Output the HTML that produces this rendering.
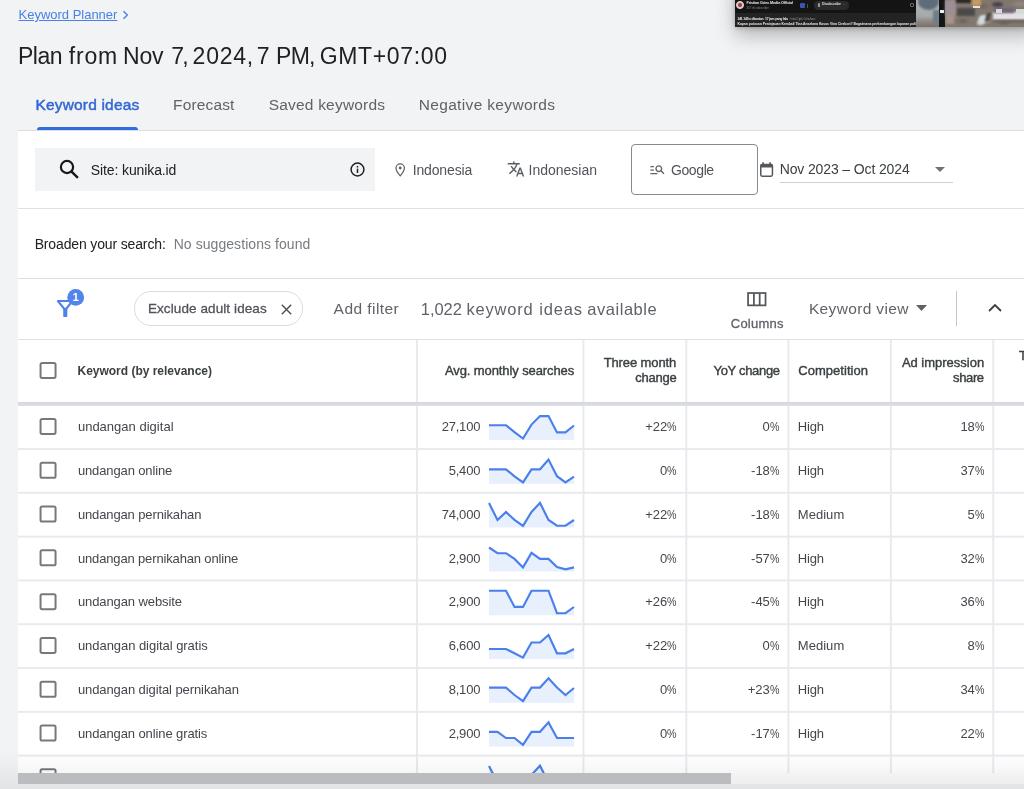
<!DOCTYPE html>
<html lang="en">
<head>
<meta charset="utf-8">
<title>Keyword Planner</title>
<style>
*{box-sizing:border-box;margin:0;padding:0}
html,body{width:1024px;height:789px;overflow:hidden;background:#f1f3f4;font-family:"Liberation Sans",sans-serif;color:#3c4043}
body{position:relative;opacity:.999}
.abs{position:absolute;white-space:nowrap}
.t{position:absolute;white-space:nowrap;line-height:1}
.panel{position:absolute;left:18px;top:130px;width:1006px;height:653px;background:#fff;border-top:1px solid #dadce0}
.hl{position:absolute;height:1px;background:#e0e0e0;left:18px;width:1006px}
.vl{position:absolute;width:1px;background:#e0e0e0;top:339px;height:434px}
.cb{position:absolute;left:39.6px;width:17px;height:17px;border:2px solid #727578;border-radius:2px;background:#fff}
.kw{position:absolute;left:78px;font-size:13px;color:#43474c;line-height:1;white-space:nowrap}
.num{position:absolute;font-size:13px;color:#43474c;line-height:1;white-space:nowrap;text-align:right}
.hd{position:absolute;font-size:13px;-webkit-text-stroke:0.4px #3c4043;color:#3c4043;line-height:15px;white-space:nowrap}
.pc{display:inline-block;transform:scaleX(.82);transform-origin:100% 50%;margin-left:-2.1px;letter-spacing:0}
svg{position:absolute;overflow:visible}
</style>
</head>
<body>

<!-- breadcrumb -->
<a class="t" id="bc" style="letter-spacing:-0.013px;transform:translateX(0.57px);left:18px;top:8px;font-size:13px;color:#4a80e8;text-decoration:underline;text-underline-offset:1.2px">Keyword Planner</a>
<svg style="left:122px;top:10px" width="7" height="10" viewBox="0 0 7 10"><path d="M1.5 1.2 L5.3 5 L1.5 8.8" fill="none" stroke="#4a80e8" stroke-width="1.4"/></svg>

<!-- title -->
<div class="t" id="ti0" style="letter-spacing:-0.531px;left:18.0px;top:45px;font-size:23px;color:#202124">Plan</div><div class="t" id="ti1" style="letter-spacing:0.8px;transform:translateX(2.07px);left:66.75px;top:45px;font-size:23px;color:#202124">from</div><div class="t" id="ti2" style="letter-spacing:-0.141px;left:123.0px;top:45px;font-size:23px;color:#202124">Nov</div><div class="t" id="ti3" style="letter-spacing:-1.793px;transform:translateX(0.63px);left:170.5px;top:45px;font-size:23px;color:#202124">7,</div><div class="t" id="ti4" style="letter-spacing:0.716px;transform:translateX(0.87px);left:191.75px;top:45px;font-size:23px;color:#202124">2024,</div><div class="t" id="ti5" style="letter-spacing:0px;transform:translateX(0.79px);left:256.0px;top:45px;font-size:23px;color:#202124">7</div><div class="t" id="ti6" style="letter-spacing:-0.7px;left:276.0px;top:45px;font-size:23px;color:#202124">PM,</div><div class="t" id="ti7" style="letter-spacing:0.631px;transform:translateX(0.79px);left:319.0px;top:45px;font-size:23px;color:#202124">GMT+07:00</div>

<!-- tabs -->
<div class="t" id="tab1" style="letter-spacing:0.177px;transform:translateX(0.94px);left:34.5px;top:97px;font-size:15.5px;color:#3267d6;-webkit-text-stroke:.45px #3267d6">Keyword ideas</div>
<div class="t" id="tab2" style="letter-spacing:0.153px;transform:translateX(0.01px);left:173px;top:97px;font-size:15.5px;color:#5f6368">Forecast</div>
<div class="t" id="tab3" style="letter-spacing:0.204px;transform:translateX(-0.83px);left:269.5px;top:97px;font-size:15.5px;color:#5f6368">Saved keywords</div>
<div class="t" id="tab4" style="letter-spacing:0.339px;transform:translateX(-0.79px);left:419.5px;top:97px;font-size:15.5px;color:#5f6368">Negative keywords</div>
<div class="abs" style="left:37px;top:127px;width:101px;height:3px;background:#306cde;border-radius:3px 3px 0 0"></div>

<!-- picture-in-picture video -->
<div class="abs" id="pip" style="left:734.5px;top:-20px;width:300px;height:46.5px;background:#141414;box-shadow:0 8px 20px rgba(0,0,0,.27),0 1px 5px rgba(0,0,0,.22);overflow:hidden;font-family:'Liberation Sans',sans-serif">
  <div class="abs" style="left:0;top:33px;width:181px;height:14px;background:#232323"></div>
  <div class="abs" style="left:1px;top:20.5px;width:8.5px;height:8.5px;border-radius:50%;background:#d9b9b9;border:1.5px solid #e6dede"></div>
  <div class="abs" style="left:3.5px;top:23px;width:4px;height:4px;border-radius:50%;background:#a43a3a"></div>
  <div class="t" style="left:12px;top:21.8px;font-size:3.8px;letter-spacing:-.13px;font-weight:bold;color:#e9e9e9;filter:blur(.3px)">Fristian Griec Media Official</div>
  <div class="t" style="left:12px;top:26.6px;font-size:2.9px;color:#8a8a8a;filter:blur(.25px)">357 rb subscriber</div>
  <div class="abs" style="left:65.5px;top:23px;width:5px;height:5px;background:#3f51b5;border-radius:1px"></div>
  <div class="abs" style="left:72px;top:23.5px;width:.8px;height:4px;background:#3d5a3d"></div>
  <div class="abs" style="left:79px;top:21px;width:35px;height:8.6px;border-radius:4.3px;background:#2b2b2b"></div>
  <div class="abs" style="left:83px;top:22.6px;width:2.6px;height:4.6px;border:.6px solid #9a9a9a;border-radius:1.2px 1.2px .4px .4px"></div>
  <div class="t" style="left:87.5px;top:23.4px;font-size:3.5px;letter-spacing:-.12px;font-weight:bold;color:#dedede;filter:blur(.3px)">Disubscribe</div>
  <div class="t" style="left:108px;top:23.4px;font-size:3.4px;color:#8a8a8a">⌄</div>
  <div class="abs" style="left:175px;top:23px;width:4.5px;height:4px;border:.7px solid #6a6a6a;border-radius:1px"></div>
  <div class="t" style="left:3px;top:37.6px;font-size:3.4px;letter-spacing:-.2px;font-weight:bold;color:#ececec;filter:blur(.3px)">341.149 x ditonton&nbsp; 17 jam yang lalu <span style="font-weight:normal;color:#8c8c8c">&nbsp;#viral #jpk #chelsea</span></div>
  <div class="t" style="left:3px;top:42.6px;font-size:3.4px;letter-spacing:-.02px;font-weight:bold;color:#e6e6e6;filter:blur(.3px)">Kapan putusan Peninjauan Kembali Tina Anselana Kasus Vina Cirebon? Bagaimana perkembangan laporan polisi yang dila</div>
  <!-- thumbnail -->
  <div class="abs" style="left:181.2px;top:20px;width:119px;height:26.5px;overflow:hidden;background:
    radial-gradient(7px 4px at 47px 21px,#6a625b 0,rgba(106,98,91,0) 100%),
    radial-gradient(9px 4px at 66px 6px,#6e655e 0,rgba(110,101,94,0) 100%),
    radial-gradient(8px 3px at 88px 23px,#6b635c 0,rgba(107,99,92,0) 100%),
    radial-gradient(10px 4px at 104px 4px,#958a80 0,rgba(149,138,128,0) 100%),
    radial-gradient(6px 3px at 70px 22px,#9a8f85 0,rgba(154,143,133,0) 100%),
    radial-gradient(7px 3px at 36px 17px,#958a81 0,rgba(149,138,129,0) 100%),
    #81776f">
    <div class="abs" style="left:0;top:0;width:24px;height:27px;background:linear-gradient(180deg,#b3b6b8 0,#a6a9ab 60%,#8e8a86 78%,#7b6d64 100%)"></div>
    <div class="abs" style="left:2.5px;top:-7px;width:21px;height:17px;border-radius:50%;background:#5f6b79;filter:blur(.9px)"></div>
    <div class="abs" style="left:17px;top:10px;width:7px;height:14px;background:#6c7f87;filter:blur(1px)"></div>
    <div class="abs" style="left:23.3px;top:0;width:5.6px;height:27px;background:#141516"></div>
    <div class="abs" style="left:24.3px;top:10px;width:3.6px;height:2.6px;background:#efefef;filter:blur(.5px)"></div>
    <div class="abs" style="left:29px;top:0;width:11.5px;height:15px;background:#9b8e95;filter:blur(.9px)"></div>
    <div class="abs" style="left:30px;top:14px;width:8px;height:10px;background:#a8938a;filter:blur(1.2px)"></div>
    <div class="abs" style="left:40px;top:-1px;width:15px;height:4px;background:#272222;filter:blur(.8px)"></div>
    <div class="abs" style="left:41.5px;top:7.5px;width:18px;height:8.5px;background:#4c4a49;filter:blur(1.3px)"></div>
    <div class="abs" style="left:56.5px;top:-1px;width:9px;height:7px;background:#c39b63;filter:blur(.8px)"></div>
    <div class="abs" style="left:57.5px;top:6px;width:7px;height:2.2px;background:#e6e2dc;filter:blur(.5px)"></div>
    <div class="abs" style="left:62px;top:14.5px;width:8px;height:10px;border-radius:3px;background:#d2dcdc;transform:skewX(-18deg);filter:blur(.8px)"></div>
    <div class="abs" style="left:70px;top:13px;width:4px;height:8px;background:#4a4644;transform:skewX(-18deg);filter:blur(.9px)"></div>
    <div class="abs" style="left:76.5px;top:2px;width:11px;height:4.5px;border-radius:50%;background:#4b4048;filter:blur(.8px)"></div>
    <div class="abs" style="left:77.5px;top:12px;width:42px;height:7.5px;background:#e3e1e4;filter:blur(.8px)"></div>
    <div class="abs" style="left:78.5px;top:8px;width:20px;height:5px;background:#6e6579;filter:blur(.9px)"></div>
    <div class="abs" style="left:80.5px;top:8.5px;width:6px;height:4px;background:#d9d6de;filter:blur(.6px)"></div>
    <div class="abs" style="left:100px;top:9px;width:20px;height:5px;background:#d3dcd6;filter:blur(.7px)"></div>
    <div class="abs" style="left:77px;top:19.5px;width:43px;height:2.2px;background:#5e5751;filter:blur(.9px)"></div>
  </div>
</div>

<!-- white panel -->
<div class="panel"></div>

<!-- search row -->
<div class="abs" style="left:35px;top:148px;width:340px;height:43px;background:#f1f3f4"></div>
<svg style="left:59px;top:159px" width="20" height="20" viewBox="0 0 20 20"><circle cx="8" cy="8" r="6.1" fill="none" stroke="#17181a" stroke-width="2.2"/><path d="M12.3 12.3 L18.9 18.9" stroke="#17181a" stroke-width="2.4"/></svg>
<div class="t" id="site" style="letter-spacing:-0.109px;transform:translateX(-0.25px);left:91px;top:163px;font-size:14px;color:#202124">Site: kunika.id</div>
<svg style="left:349.7px;top:162.3px" width="15" height="15" viewBox="0 0 15 15"><circle cx="7.5" cy="7.5" r="6.4" fill="none" stroke="#202124" stroke-width="1.5"/><rect x="6.75" y="6.6" width="1.5" height="4.4" fill="#202124"/><rect x="6.75" y="3.9" width="1.5" height="1.6" fill="#202124"/></svg>

<svg style="left:395px;top:162.6px" width="10.4" height="14" viewBox="0 0 11 15"><path d="M5.5 1 C3 1 1 2.9 1 5.4 C1 8.6 5.5 13.8 5.5 13.8 C5.5 13.8 10 8.6 10 5.4 C10 2.9 8 1 5.5 1 Z" fill="none" stroke="#5f6368" stroke-width="1.35"/><circle cx="5.5" cy="5.3" r="1.55" fill="#5f6368"/></svg>
<div class="t" id="loc" style="letter-spacing:-0.137px;transform:translateX(-0.36px);left:413px;top:163px;font-size:14px;color:#50545a">Indonesia</div>

<svg style="left:507.25px;top:160.2px" width="18" height="18" viewBox="0 0 24 24"><path fill="#5a5e63" d="M12.87 15.07l-2.54-2.51.03-.03c1.74-1.94 2.98-4.17 3.71-6.53H17V4h-7V2H8v2H1v1.99h11.17C11.5 7.92 10.44 9.75 9 11.35 8.07 10.32 7.3 9.19 6.69 8h-2c.73 1.63 1.73 3.17 2.98 4.56l-5.09 5.02L4 19l5-5 3.11 3.11.76-2.04zM18.5 10h-2L12 22h2l1.12-3h4.75L21 22h2l-4.5-12zm-2.62 7l1.62-4.33L19.12 17h-3.24z"/></svg>
<div class="t" id="lang" style="letter-spacing:-0.011px;transform:translateX(-0.38px);left:529px;top:163px;font-size:14px;color:#50545a">Indonesian</div>

<div class="abs" style="left:631px;top:144px;width:127px;height:51px;border:1px solid #858b91;border-radius:4px;background:#fff"></div>
<svg style="left:648.85px;top:161.2px" width="16.8" height="16.8" viewBox="0 0 24 24"><path fill="#5f6368" d="M7 9H2V7h5v2zm0 3H2v2h5v-2zm13.59 7l-3.83-3.83c-.8.52-1.74.83-2.76.83-2.76 0-5-2.24-5-5s2.24-5 5-5 5 2.24 5 5c0 1.02-.31 1.96-.83 2.75L22 17.59 20.59 19zM17 11c0-1.65-1.35-3-3-3s-3 1.35-3 3 1.35 3 3 3 3-1.35 3-3zM2 19h10v-2H2v2z"/></svg>
<div class="t" id="goog" style="letter-spacing:-0.395px;transform:translateX(-0.02px);left:671px;top:163px;font-size:14px;color:#50545a">Google</div>

<svg style="left:760px;top:162px" width="13.2" height="15" viewBox="0 0 13.2 15"><rect x=".75" y="2.6" width="11.7" height="11.6" rx="1.4" fill="none" stroke="#54585d" stroke-width="1.5"/><rect x=".75" y="1.9" width="11.7" height="3.7" rx=".8" fill="#54585d"/><rect x="2.2" y=".3" width="1.7" height="2.5" fill="#54585d"/><rect x="9.3" y=".3" width="1.7" height="2.5" fill="#54585d"/></svg>
<div class="t" id="date" style="letter-spacing:-0.127px;transform:translateX(0.65px);left:779px;top:162px;font-size:14px;color:#3c4043">Nov 2023 – Oct 2024</div>
<svg style="left:935px;top:167px" width="10" height="5" viewBox="0 0 10 5"><path d="M0 0 H10 L5 5 Z" fill="#6f7377"/></svg>
<div class="abs" style="left:779.5px;top:182px;width:173.5px;height:1px;background:#cdd0d5"></div>

<div class="hl" style="top:208px"></div>

<!-- broaden -->
<div class="t" id="broad" style="letter-spacing:-0.144px;transform:translateX(-0.35px);left:35px;top:237px;font-size:14px;color:#202124">Broaden your search:</div>
<div class="t" id="nosug" style="letter-spacing:0.064px;transform:translateX(0.67px);left:173px;top:237px;font-size:14px;color:#777b80">No suggestions found</div>

<div class="hl" style="top:278px"></div>

<!-- filter toolbar -->
<svg style="left:0;top:0" width="1024" height="789"><path d="M57.9 301 H72.5 L65.2 310 Z" fill="none" stroke="#4e82e6" stroke-width="2" stroke-linejoin="round"/><rect x="63.2" y="308.5" width="4.1" height="8.6" rx=".8" fill="#4e82e6"/><circle cx="75.7" cy="297.4" r="8.4" fill="#5284ec"/></svg>
<div class="t" style="left:72.6px;top:291.8px;font-size:11.5px;font-weight:bold;color:#fff">1</div>

<div class="abs" style="left:133.6px;top:291.4px;width:169px;height:34.2px;border:1px solid #dadce0;border-radius:17px;background:#fff"></div>
<div class="t" id="chip" style="letter-spacing:0.096px;transform:translateX(-0.09px);left:148px;top:302px;font-size:13.5px;color:#50545a;-webkit-text-stroke:.3px #50545a">Exclude adult ideas</div>
<svg style="left:280.5px;top:303.6px" width="11" height="11" viewBox="0 0 11 11"><path d="M0.8 0.8 L10.2 10.2 M10.2 0.8 L0.8 10.2" stroke="#50545a" stroke-width="1.5"/></svg>

<div class="t" id="addf" style="letter-spacing:0.437px;transform:translateX(0.62px);left:333px;top:301px;font-size:15.5px;color:#5f6368">Add filter</div>
<div class="t" id="av0" style="letter-spacing:-0.066px;transform:translateX(0.53px);left:420.25px;top:300.5px;font-size:16.5px;color:#5f6368">1,022</div><div class="t" id="av1" style="letter-spacing:0.8px;transform:translateX(0.5px);left:466px;top:300.5px;font-size:16.5px;color:#5f6368">keyword</div><div class="t" id="av2" style="letter-spacing:0.792px;transform:translateX(0.32px);left:539px;top:300.5px;font-size:16.5px;color:#5f6368">ideas</div><div class="t" id="av3" style="letter-spacing:0.561px;transform:translateX(0.64px);left:586.5px;top:300.5px;font-size:16.5px;color:#5f6368">available</div>

<svg style="left:747.4px;top:291.7px" width="19.6" height="14.4" viewBox="0 0 19 14"><rect x="1" y="1" width="17" height="12" fill="none" stroke="#54585d" stroke-width="1.7"/><path d="M6.7 1 V13 M12.3 1 V13" stroke="#54585d" stroke-width="1.7"/></svg>
<div class="t" id="cols" style="letter-spacing:0.214px;transform:translateX(-0.19px);left:731px;top:317px;font-size:13px;color:#5f6368;-webkit-text-stroke:.3px #5f6368">Columns</div>
<div class="t" id="kview" style="letter-spacing:0.358px;transform:translateX(-0.11px);left:809px;top:301px;font-size:15.5px;color:#5f6368">Keyword view</div>
<svg style="left:916px;top:305px" width="11" height="6" viewBox="0 0 11 6"><path d="M0 0 H11 L5.5 6 Z" fill="#5f6368"/></svg>
<div class="abs" style="left:956px;top:291px;width:1px;height:35px;background:#c4c7c9"></div>
<svg style="left:988px;top:303px" width="14" height="9" viewBox="0 0 14 9"><path d="M1 8 L7 2 L13 8" fill="none" stroke="#3c4043" stroke-width="1.8"/></svg>

<!-- table -->
<div class="hl" style="top:339px"></div>
<svg style="left:0;top:0" width="1024" height="789"><rect x="415.95" y="339.5" width="2" height="434" fill="#e8eaee"/><rect x="582.45" y="339.5" width="2" height="434" fill="#e8eaee"/><rect x="685.30" y="339.5" width="2" height="434" fill="#e8eaee"/><rect x="787.45" y="339.5" width="2" height="434" fill="#e8eaee"/><rect x="889.85" y="339.5" width="2" height="434" fill="#e8eaee"/><rect x="992.25" y="339.5" width="2" height="434" fill="#e8eaee"/></svg>
<div class="abs" style="left:18px;top:401.7px;width:1006px;height:4px;background:linear-gradient(180deg,#d3d6da,#dfe1e5)"></div>
<svg style="left:0;top:0" width="1024" height="789"><rect x="40.55" y="418.95" width="15" height="15" rx="1.6" fill="#fff" stroke="#75787c" stroke-width="2"/><polygon points="489.0,440.0 489.0,425.2 497.5,425.2 506.0,425.2 514.5,432.2 523.0,438.5 531.5,424.6 540.0,416.1 548.5,416.1 557.0,432.4 565.5,432.4 574.0,425.5 574.0,440.0" fill="#e8f0fe"/><polyline points="489.0,425.2 497.5,425.2 506.0,425.2 514.5,432.2 523.0,438.5 531.5,424.6 540.0,416.1 548.5,416.1 557.0,432.4 565.5,432.4 574.0,425.5" fill="none" stroke="#4a80ec" stroke-width="2.15" stroke-linejoin="miter"/><rect x="18" y="448.05" width="1006" height="2" fill="#e8eaee"/><rect x="40.55" y="462.75" width="15" height="15" rx="1.6" fill="#fff" stroke="#75787c" stroke-width="2"/><polygon points="489.0,483.8 489.0,469.3 497.5,469.3 506.0,469.3 514.5,476.4 523.0,482.4 531.5,469.3 540.0,469.3 548.5,459.6 557.0,476.2 565.5,482.4 574.0,476.7 574.0,483.8" fill="#e8f0fe"/><polyline points="489.0,469.3 497.5,469.3 506.0,469.3 514.5,476.4 523.0,482.4 531.5,469.3 540.0,469.3 548.5,459.6 557.0,476.2 565.5,482.4 574.0,476.7" fill="none" stroke="#4a80ec" stroke-width="2.15" stroke-linejoin="miter"/><rect x="18" y="491.85" width="1006" height="2" fill="#e8eaee"/><rect x="40.55" y="506.55" width="15" height="15" rx="1.6" fill="#fff" stroke="#75787c" stroke-width="2"/><polygon points="489.0,527.6 489.0,503.1 497.5,520.0 506.0,512.0 514.5,519.8 523.0,525.9 531.5,512.0 540.0,502.9 548.5,520.0 557.0,525.7 565.5,525.7 574.0,520.0 574.0,527.6" fill="#e8f0fe"/><polyline points="489.0,503.1 497.5,520.0 506.0,512.0 514.5,519.8 523.0,525.9 531.5,512.0 540.0,502.9 548.5,520.0 557.0,525.7 565.5,525.7 574.0,520.0" fill="none" stroke="#4a80ec" stroke-width="2.15" stroke-linejoin="miter"/><rect x="18" y="535.65" width="1006" height="2" fill="#e8eaee"/><rect x="40.55" y="550.35" width="15" height="15" rx="1.6" fill="#fff" stroke="#75787c" stroke-width="2"/><polygon points="489.0,571.4 489.0,547.5 497.5,553.2 506.0,553.2 514.5,558.9 523.0,567.4 531.5,552.9 540.0,558.9 548.5,558.9 557.0,567.1 565.5,569.3 574.0,567.4 574.0,571.4" fill="#e8f0fe"/><polyline points="489.0,547.5 497.5,553.2 506.0,553.2 514.5,558.9 523.0,567.4 531.5,552.9 540.0,558.9 548.5,558.9 557.0,567.1 565.5,569.3 574.0,567.4" fill="none" stroke="#4a80ec" stroke-width="2.15" stroke-linejoin="miter"/><rect x="18" y="579.45" width="1006" height="2" fill="#e8eaee"/><rect x="40.55" y="594.15" width="15" height="15" rx="1.6" fill="#fff" stroke="#75787c" stroke-width="2"/><polygon points="489.0,615.2 489.0,590.7 497.5,590.7 506.0,590.7 514.5,606.9 523.0,606.9 531.5,590.7 540.0,590.7 548.5,590.7 557.0,613.2 565.5,613.2 574.0,607.0 574.0,615.2" fill="#e8f0fe"/><polyline points="489.0,590.7 497.5,590.7 506.0,590.7 514.5,606.9 523.0,606.9 531.5,590.7 540.0,590.7 548.5,590.7 557.0,613.2 565.5,613.2 574.0,607.0" fill="none" stroke="#4a80ec" stroke-width="2.15" stroke-linejoin="miter"/><rect x="18" y="623.25" width="1006" height="2" fill="#e8eaee"/><rect x="40.55" y="637.95" width="15" height="15" rx="1.6" fill="#fff" stroke="#75787c" stroke-width="2"/><polygon points="489.0,659.0 489.0,649.0 497.5,649.0 506.0,649.0 514.5,653.3 523.0,657.6 531.5,642.5 540.0,642.5 548.5,635.0 557.0,653.3 565.5,653.3 574.0,649.0 574.0,659.0" fill="#e8f0fe"/><polyline points="489.0,649.0 497.5,649.0 506.0,649.0 514.5,653.3 523.0,657.6 531.5,642.5 540.0,642.5 548.5,635.0 557.0,653.3 565.5,653.3 574.0,649.0" fill="none" stroke="#4a80ec" stroke-width="2.15" stroke-linejoin="miter"/><rect x="18" y="667.05" width="1006" height="2" fill="#e8eaee"/><rect x="40.55" y="681.75" width="15" height="15" rx="1.6" fill="#fff" stroke="#75787c" stroke-width="2"/><polygon points="489.0,702.8 489.0,687.6 497.5,687.6 506.0,687.6 514.5,695.0 523.0,701.1 531.5,687.6 540.0,687.6 548.5,678.3 557.0,687.6 565.5,695.0 574.0,688.0 574.0,702.8" fill="#e8f0fe"/><polyline points="489.0,687.6 497.5,687.6 506.0,687.6 514.5,695.0 523.0,701.1 531.5,687.6 540.0,687.6 548.5,678.3 557.0,687.6 565.5,695.0 574.0,688.0" fill="none" stroke="#4a80ec" stroke-width="2.15" stroke-linejoin="miter"/><rect x="18" y="710.85" width="1006" height="2" fill="#e8eaee"/><rect x="40.55" y="725.55" width="15" height="15" rx="1.6" fill="#fff" stroke="#75787c" stroke-width="2"/><polygon points="489.0,746.6 489.0,731.8 497.5,731.8 506.0,738.0 514.5,738.0 523.0,744.9 531.5,731.8 540.0,731.8 548.5,722.4 557.0,738.0 565.5,738.0 574.0,738.0 574.0,746.6" fill="#e8f0fe"/><polyline points="489.0,731.8 497.5,731.8 506.0,738.0 514.5,738.0 523.0,744.9 531.5,731.8 540.0,731.8 548.5,722.4 557.0,738.0 565.5,738.0 574.0,738.0" fill="none" stroke="#4a80ec" stroke-width="2.15" stroke-linejoin="miter"/><rect x="18" y="754.65" width="1006" height="2" fill="#e8eaee"/><rect x="40.55" y="769.35" width="15" height="15" rx="1.6" fill="#fff" stroke="#75787c" stroke-width="2"/><polygon points="489.0,790.4 489.0,765.9 497.5,782.8 506.0,774.8 514.5,782.6 523.0,788.7 531.5,774.8 540.0,765.7 548.5,782.8 557.0,788.5 565.5,788.5 574.0,782.8 574.0,790.4" fill="#e8f0fe"/><polyline points="489.0,765.9 497.5,782.8 506.0,774.8 514.5,782.6 523.0,788.7 531.5,774.8 540.0,765.7 548.5,782.8 557.0,788.5 565.5,788.5 574.0,782.8" fill="none" stroke="#4a80ec" stroke-width="2.15" stroke-linejoin="miter"/></svg>
<svg style="left:0;top:0" width="1024" height="789"><rect x="40.55" y="362.9" width="15" height="15" rx="1.6" fill="#fff" stroke="#75787c" stroke-width="2"/></svg>
<div class="hd" id="h1" style="letter-spacing:-0.012px;transform:translateX(-0.52px);left:78px;top:364px;font-weight:bold;font-size:12px;-webkit-text-stroke:0">Keyword (by relevance)</div>
<div class="hd" id="h2" style="letter-spacing:-0.103px;transform:translateX(0.1px);right:450px;top:363px;text-align:right">Avg. monthly searches</div>
<div class="hd" id="h3a" style="letter-spacing:-0.112px;transform:translateX(-0.85px);right:347px;top:355px">Three month</div>
<div class="hd" id="h3b" style="letter-spacing:-0.243px;transform:translateX(-0.49px);right:347px;top:370px">change</div>
<div class="hd" id="h4" style="letter-spacing:-0.316px;transform:translateX(0.75px);right:245px;top:363px;text-align:right">YoY change</div>
<div class="hd" id="h5" style="letter-spacing:0.037px;transform:translateX(0.22px);left:798px;top:363px">Competition</div>
<div class="hd" id="h6a" style="letter-spacing:-0.011px;transform:translateX(-0.89px);right:39px;top:355px">Ad impression</div>
<div class="hd" id="h6b" style="letter-spacing:-0.379px;transform:translateX(-1.32px);right:39px;top:370px">share</div>
<div class="hd" id="h7" style="left:1019px;top:348px">T</div>
<div class="kw" id="r0k" style="letter-spacing:0.015px;transform:translateX(-0.11px);top:420.00px">undangan digital</div>
<div class="num" id="r0n" style="letter-spacing:-0.2px;right:543.8px;top:420.00px">27,100</div>
<div class="num" id="r0t" style="letter-spacing:0px;right:347.2px;top:420.00px">+22<span class="pc">%</span></div>
<div class="num" id="r0y" style="letter-spacing:0px;right:244.7px;top:420.00px">0<span class="pc">%</span></div>
<div class="num" id="r0a" style="letter-spacing:0px;right:39.7px;top:420.00px">18<span class="pc">%</span></div>
<div class="kw" id="r0c" style="letter-spacing:-0.216px;transform:translateX(-0.19px);left:798px;top:420.00px">High</div>
<div class="kw" id="r1k" style="letter-spacing:-0.121px;transform:translateX(-0.11px);top:464.00px">undangan online</div>
<div class="num" id="r1n" style="letter-spacing:-0.2px;right:543.8px;top:464.00px">5,400</div>
<div class="num" id="r1t" style="letter-spacing:0px;right:347.2px;top:464.00px">0<span class="pc">%</span></div>
<div class="num" id="r1y" style="letter-spacing:0px;right:244.7px;top:464.00px">-18<span class="pc">%</span></div>
<div class="num" id="r1a" style="letter-spacing:0px;right:39.7px;top:464.00px">37<span class="pc">%</span></div>
<div class="kw" id="r1c" style="letter-spacing:-0.216px;transform:translateX(-0.19px);left:798px;top:464.00px">High</div>
<div class="kw" id="r2k" style="letter-spacing:-0.125px;transform:translateX(-0.11px);top:508.00px">undangan pernikahan</div>
<div class="num" id="r2n" style="letter-spacing:-0.2px;right:543.8px;top:508.00px">74,000</div>
<div class="num" id="r2t" style="letter-spacing:0px;right:347.2px;top:508.00px">+22<span class="pc">%</span></div>
<div class="num" id="r2y" style="letter-spacing:0px;right:244.7px;top:508.00px">-18<span class="pc">%</span></div>
<div class="num" id="r2a" style="letter-spacing:0px;right:39.7px;top:508.00px">5<span class="pc">%</span></div>
<div class="kw" id="r2c" style="letter-spacing:0.034px;transform:translateX(-0.19px);left:798px;top:508.00px">Medium</div>
<div class="kw" id="r3k" style="letter-spacing:-0.146px;transform:translateX(-0.11px);top:552.00px">undangan pernikahan online</div>
<div class="num" id="r3n" style="letter-spacing:-0.2px;right:543.8px;top:552.00px">2,900</div>
<div class="num" id="r3t" style="letter-spacing:0px;right:347.2px;top:552.00px">0<span class="pc">%</span></div>
<div class="num" id="r3y" style="letter-spacing:0px;right:244.7px;top:552.00px">-57<span class="pc">%</span></div>
<div class="num" id="r3a" style="letter-spacing:0px;right:39.7px;top:552.00px">32<span class="pc">%</span></div>
<div class="kw" id="r3c" style="letter-spacing:-0.216px;transform:translateX(-0.19px);left:798px;top:552.00px">High</div>
<div class="kw" id="r4k" style="letter-spacing:-0.098px;transform:translateX(-0.11px);top:595.00px">undangan website</div>
<div class="num" id="r4n" style="letter-spacing:-0.2px;right:543.8px;top:595.00px">2,900</div>
<div class="num" id="r4t" style="letter-spacing:0px;right:347.2px;top:595.00px">+26<span class="pc">%</span></div>
<div class="num" id="r4y" style="letter-spacing:0px;right:244.7px;top:595.00px">-45<span class="pc">%</span></div>
<div class="num" id="r4a" style="letter-spacing:0px;right:39.7px;top:595.00px">36<span class="pc">%</span></div>
<div class="kw" id="r4c" style="letter-spacing:-0.216px;transform:translateX(-0.19px);left:798px;top:595.00px">High</div>
<div class="kw" id="r5k" style="letter-spacing:-0.045px;transform:translateX(-0.11px);top:639.00px">undangan digital gratis</div>
<div class="num" id="r5n" style="letter-spacing:-0.2px;right:543.8px;top:639.00px">6,600</div>
<div class="num" id="r5t" style="letter-spacing:0px;right:347.2px;top:639.00px">+22<span class="pc">%</span></div>
<div class="num" id="r5y" style="letter-spacing:0px;right:244.7px;top:639.00px">0<span class="pc">%</span></div>
<div class="num" id="r5a" style="letter-spacing:0px;right:39.7px;top:639.00px">8<span class="pc">%</span></div>
<div class="kw" id="r5c" style="letter-spacing:0.034px;transform:translateX(-0.19px);left:798px;top:639.00px">Medium</div>
<div class="kw" id="r6k" style="letter-spacing:-0.087px;transform:translateX(-0.11px);top:683.00px">undangan digital pernikahan</div>
<div class="num" id="r6n" style="letter-spacing:-0.2px;right:543.8px;top:683.00px">8,100</div>
<div class="num" id="r6t" style="letter-spacing:0px;right:347.2px;top:683.00px">0<span class="pc">%</span></div>
<div class="num" id="r6y" style="letter-spacing:0px;right:244.7px;top:683.00px">+23<span class="pc">%</span></div>
<div class="num" id="r6a" style="letter-spacing:0px;right:39.7px;top:683.00px">34<span class="pc">%</span></div>
<div class="kw" id="r6c" style="letter-spacing:-0.216px;transform:translateX(-0.19px);left:798px;top:683.00px">High</div>
<div class="kw" id="r7k" style="letter-spacing:-0.101px;transform:translateX(-0.11px);top:727.00px">undangan online gratis</div>
<div class="num" id="r7n" style="letter-spacing:-0.2px;right:543.8px;top:727.00px">2,900</div>
<div class="num" id="r7t" style="letter-spacing:0px;right:347.2px;top:727.00px">0<span class="pc">%</span></div>
<div class="num" id="r7y" style="letter-spacing:0px;right:244.7px;top:727.00px">-17<span class="pc">%</span></div>
<div class="num" id="r7a" style="letter-spacing:0px;right:39.7px;top:727.00px">22<span class="pc">%</span></div>
<div class="kw" id="r7c" style="letter-spacing:-0.216px;transform:translateX(-0.19px);left:798px;top:727.00px">High</div>
<div class="kw" id="r8k" style="letter-spacing:-0.1px;transform:translateX(0.12px);top:771.00px">undangan pernikahan digital</div>
<div class="num" id="r8n" style="letter-spacing:-0.2px;right:543.8px;top:771.00px">40,500</div>
<div class="num" id="r8t" style="letter-spacing:0px;right:347.2px;top:771.00px">-33<span class="pc">%</span></div>
<div class="num" id="r8y" style="letter-spacing:0px;right:244.7px;top:771.00px">-33<span class="pc">%</span></div>
<div class="num" id="r8a" style="letter-spacing:0px;right:39.7px;top:771.00px">40<span class="pc">%</span></div>
<div class="kw" id="r8c" style="letter-spacing:-0.3px;left:798px;top:771.00px">High</div>

<!-- scrollbar -->
<div class="abs" style="left:18px;top:773px;width:1006px;height:10.7px;background:#fdfdfd"></div>
<div class="abs" style="left:0;top:783.7px;width:1024px;height:6px;background:#f1f3f4"></div>
<div class="abs" style="left:0;top:752px;width:1024px;height:37px;background:linear-gradient(180deg,rgba(0,0,0,0),rgba(0,0,0,.068))"></div>
<div class="abs" style="left:18px;top:773.1px;width:713.3px;height:10.6px;background:#babcc0"></div>

</body>
</html>
